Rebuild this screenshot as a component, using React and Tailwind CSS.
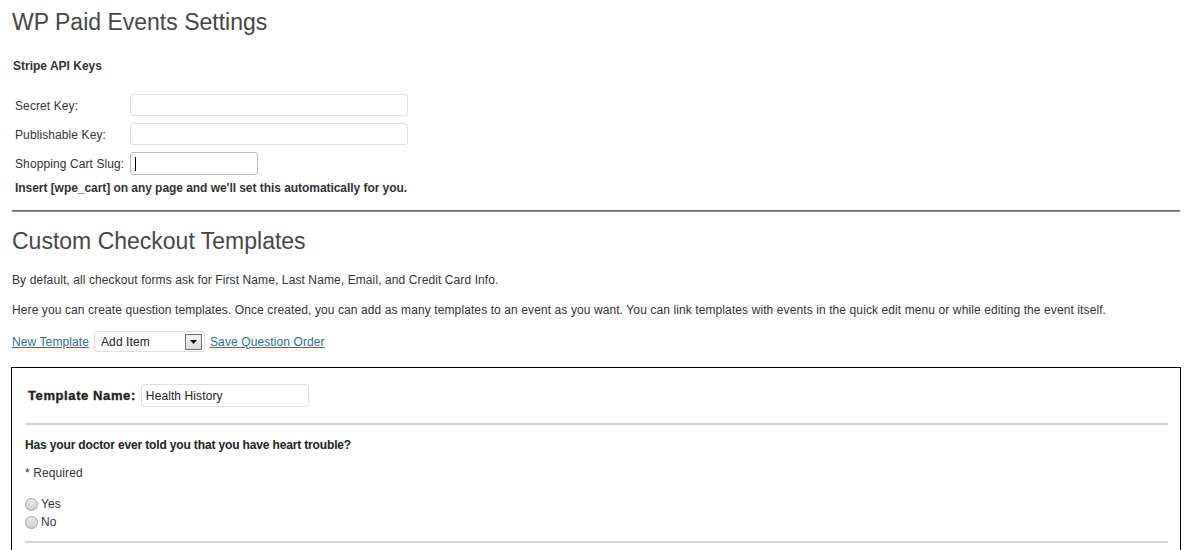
import React from 'react';

const Radio = ({ label }) => (
  <label className="flex items-center gap-[3px] h-[18px]">
    <span className="w-[13px] h-[13px] rounded-full border border-[#a0a0a0] bg-gradient-to-b from-[#ececec] to-[#cfcfcf]" />
    <span>{label}</span>
  </label>
);

const App = () => {
  return (
    <div className="bg-white w-[1187px] h-[550px] overflow-hidden text-[12px] tracking-[0.1px] text-[#333] font-['Liberation_Sans',Arial,sans-serif]">
      <div className="pl-[12px] pr-[7px]">
        <h2 className="text-[23px] leading-[29px] tracking-normal text-[#464646] pt-[8px]">WP Paid Events Settings</h2>

        <h3 className="font-bold text-[12px] tracking-normal mt-[21px] ml-[1px] leading-[16px]">Stripe API Keys</h3>

        <table className="mt-[20px] ml-[1px] border-separate border-spacing-x-[2px] border-spacing-y-[0px]">
          <tbody>
            <tr className="h-[29px] align-top">
              <td className="w-[113px] pt-[3px]">Secret Key:</td>
              <td>
                <input className="w-[278px] h-[22px] border border-[#dfdfdf] rounded-[3px] outline-none" />
              </td>
            </tr>
            <tr className="h-[29px] align-top">
              <td className="pt-[3px]">Publishable Key:</td>
              <td>
                <input className="w-[278px] h-[22px] border border-[#dfdfdf] rounded-[3px] outline-none" />
              </td>
            </tr>
            <tr className="h-[24px] align-top">
              <td className="pt-[3px] whitespace-nowrap">Shopping Cart Slug:</td>
              <td>
                <div className="w-[128px] h-[23px] border border-[#bbb] rounded-[3px] flex items-center pl-[4px]">
                  <span className="w-[1px] h-[14px] bg-black" />
                </div>
              </td>
            </tr>
          </tbody>
        </table>
        <p className="font-bold tracking-[-0.05px] mt-[4px] ml-[3px] leading-[16px]">Insert [wpe_cart] on any page and we'll set this automatically for you.</p>

        <hr className="mt-[14px] border-0 h-[2px] bg-gradient-to-b from-[#555] to-[#aaa]" />

        <h2 className="text-[23px] leading-[29px] tracking-normal text-[#464646] mt-[15px]">Custom Checkout Templates</h2>
        <p className="mt-[16px] leading-[16px]">By default, all checkout forms ask for First Name, Last Name, Email, and Credit Card Info.</p>
        <p className="mt-[14px] leading-[16px]">Here you can create question templates. Once created, you can add as many templates to an event as you want. You can link templates with events in the quick edit menu or while editing the event itself.</p>

        <div className="flex items-center mt-[13px] h-[21px]">
          <a href="#" className="text-[#21759b] underline">New Template</a>
          <div className="ml-[5px] w-[111px] h-[21px] border border-[#dfdfdf] rounded-[3px] flex items-center justify-between pl-[6px] pr-[2px] text-[#222]">
            <span>Add Item</span>
            <span className="w-[17px] h-[16px] border border-[#707070] bg-gradient-to-b from-[#f4f4f4] to-[#dcdcdc] flex items-center justify-center">
              <svg width="7" height="4" viewBox="0 0 7 4"><path d="M0 0h7L3.5 4z" fill="#000" /></svg>
            </span>
          </div>
          <a href="#" className="ml-[5px] text-[#21759b] underline">Save Question Order</a>
        </div>

        <div className="mt-[15px] ml-[-1px] w-[1170px] h-[300px] border border-black px-[13px]">
          <div className="flex items-center h-[55px] pl-[3px]">
            <span className="font-bold text-[13px] text-[#222] tracking-[0.6px] [-webkit-text-stroke:0.35px_#222]">Template Name:</span>
            <input defaultValue="Health History" className="ml-[5px] w-[168px] h-[23px] border border-[#dfdfdf] rounded-[3px] px-[4px] text-[12px] text-[#222] outline-none" />
          </div>
          <hr className="border-0 h-[2px] bg-[#d4d4d4] w-[1143px]" />
          <p className="font-bold tracking-[-0.15px] mt-[12px] leading-[16px] text-[#222]">Has your doctor ever told you that you have heart trouble?</p>
          <p className="mt-[12px] leading-[16px]">* Required</p>
          <div className="mt-[14px]">
            <Radio label="Yes" />
            <Radio label="No" />
          </div>
          <hr className="mt-[10px] border-0 h-[2px] bg-[#d4d4d4] w-[1143px]" />
        </div>
      </div>
    </div>
  );
};

export default App;
